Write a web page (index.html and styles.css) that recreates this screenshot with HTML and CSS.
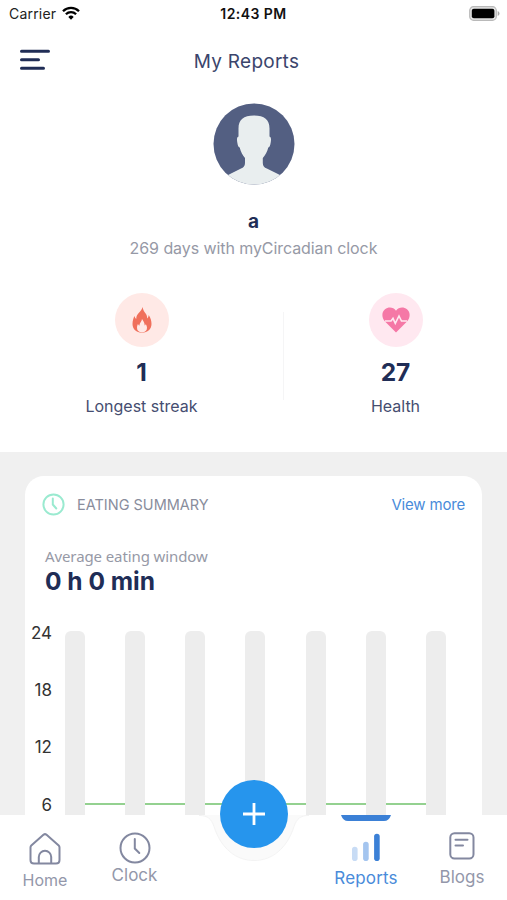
FILE: index.html
```html
<!DOCTYPE html>
<html lang="en">
<head>
<meta charset="utf-8">
<title>My Reports</title>
<link rel="stylesheet" href="styles.css">
</head>
<body>
<div class="status">
  <div class="carrier"><span>Carrier</span>
    <svg width="18" height="14" viewBox="0 0 18 14" fill="none" stroke="#000" stroke-width="2.3"><path d="M1 5.2a11.3 11.3 0 0 1 16 0M3.9 8.3a7.2 7.2 0 0 1 10.2 0"/><path d="M9 13.8l-2.7-2.9a3.8 3.8 0 0 1 5.4 0z" fill="#000" stroke="none"/></svg>
  </div>
  <div class="time">12:43 PM</div>
  <svg class="battery" width="31" height="15" viewBox="0 0 31 15"><rect x=".7" y=".7" width="26.6" height="13.6" rx="3.8" fill="#e4e4e4" stroke="#b9b9b9" stroke-width="1.2"/><rect x="2.8" y="2.7" width="22.6" height="9.6" rx="2" fill="#000"/><path d="M28.7 5v5q1.8-.6 1.8-2.5T28.7 5z" fill="#aaa"/></svg>
</div>
<header class="header">
  <svg width="32" height="22" viewBox="0 0 32 22" stroke="#202d56" stroke-width="3" stroke-linecap="round"><path d="M2.500 2.300h27M2.500 10.800h17M2.500 19.200h22"/></svg>
  <h1>My Reports</h1>
</header>
<section class="profile">
  <svg class="avatar" width="82" height="82" viewBox="0 0 82 82">
    <clipPath id="disc"><circle cx="41" cy="41" r="40.5"/></clipPath>
    <circle cx="41" cy="41" r="40.5" fill="#535f82"/>
    <path clip-path="url(#disc)" fill="#e9eeef" d="M41 12.500c10.500 0 15.500 4 15.500 13v8c1.800.5 1.700 3 1.200 6-.5 3-1 4.500-2.400 5-1 4.500-3 7.500-5.500 10.500v5c0 3 1.500 4.500 4 5.500L66 71.500l5 3V82H11v-7.500l5-3 12-6c2.500-1 4-2.500 4-5.500v-5c-2.500-3-4.300-6-5.300-10.500-1.400-.5-1.900-2-2.400-5-.5-3-.6-5.500 1.200-6v-8c0-9 5-13 15.500-13z"/>
  </svg>
  <h2>a</h2>
  <p>269 days with myCircadian clock</p>
</section>
<section class="stats">
  <div class="stat">
    <div class="badge fire"><svg width="20" height="26" viewBox="0 0 20 26"><path fill="#f0705c" d="M10.500 0c.5 3 2 5 3.500 7 .8 1.300 1.200 2.700 1.100 4.500 1-.7 1.500-2 1.600-3.500 2 3 2.800 6 2.800 9 0 5-3.800 8.700-9.500 8.700S.5 22 .5 17c0-3.500 1-6 2-8 .3 1.300.8 2.200 1.700 3C4.200 6 9.500 5 10.500 0z"/><path fill="#ffe9e6" d="M10 25.500c-3.300 0-5-2-5-4.700 0-1.500.4-2.900 1-3.800.3.900.7 1.400 1.300 1.700.2-3 2.500-4 2.700-6.700 1.400 2 2.600 3.600 2.700 6.500.6-.4.900-.9 1.100-1.600.8 1.400 1.200 2.700 1.200 3.900 0 2.700-1.700 4.700-5 4.700z"/></svg></div>
    <strong>1</strong><span>Longest streak</span>
  </div>
  <div class="divider"></div>
  <div class="stat">
    <div class="badge heart"><svg width="28" height="26" viewBox="0 0 28 26"><path fill="#f578a6" d="M14 25.500L3 14.500C-.5 10.500-.5 5 3 2.200 6.500-.6 11.500 0 14 3.700 16.500 0 21.500-.6 25 2.200c3.500 2.800 3.500 8.300 0 12.300z"/><path d="M3 14h6l2-2.600 2.300 5L17 9l2.500 5H25" fill="none" stroke="#ffe8f0" stroke-width="1.600"/></svg></div>
    <strong>27</strong><span>Health</span>
  </div>
</section>
<main class="content">
  <article class="card">
    <div class="card-head">
      <svg width="23" height="23" viewBox="0 0 23 23" fill="none" stroke="#9aead0" stroke-width="2"><circle cx="11.500" cy="11.500" r="10.100"/><path d="M10.800 5.500v6l3.500 4" stroke-linecap="round"/></svg>
      <h3>EATING SUMMARY</h3><a>View more</a>
    </div>
    <div class="average"><span>Average eating window</span><strong>0 h 0 min</strong></div>
    <div class="chart">
      <div class="axis"><span>24</span><span>18</span><span>12</span><span>6</span></div>
      <div class="bars"><i></i><i></i><i></i><i></i><i></i><i></i><i></i></div>
    </div>
  </article>
</main>
<nav class="nav">
  <div class="tab home"><svg width="32" height="32" viewBox="0 0 32 32" fill="none" stroke="#8388a0" stroke-width="2" stroke-linejoin="round"><path d="M1.500 14.500q0-1.200.8-2L14.700 1.600q1.300-1 2.600 0l12.400 10.900q.8.800.8 2V27q0 3.500-3.500 3.500H5Q1.500 30.500 1.500 27zM9.800 30V24a6.200 6.200 0 0 1 12.400 0v6"/></svg><span>Home</span></div>
  <div class="tab clock"><svg width="32" height="32" viewBox="0 0 32 32" fill="none" stroke="#8388a0" stroke-width="2"><circle cx="16" cy="16" r="14.500"/><path d="M15.800 7v9.500l4.500 4.500" stroke-linecap="round"/></svg><span>Clock</span></div>
  <div class="tab reports"><svg width="30" height="29" viewBox="0 0 30 29" stroke-width="5.600" stroke-linecap="round"><path d="M3.800 16.500v8.700" stroke="#c8dcf5"/><path d="M14.900 11.500v13.700" stroke="#a4c5ef"/><path d="M25.900 3.500v21.700" stroke="#3b80d6"/></svg><span>Reports</span></div>
  <div class="tab blogs"><svg width="26" height="28" viewBox="0 0 26 28" fill="none" stroke="#8388a0" stroke-width="2"><rect x="1.300" y="1.300" width="23.200" height="25.200" rx="4.200"/><path d="M6.500 7.700h12M6.500 13.500h7.500" stroke-linecap="round"/></svg><span>Blogs</span></div>
  <svg class="notch" width="110" height="50" viewBox="0 0 110 50"><path d="M0 0c9 0 12 3 15 11 7 22 22 34 40 34s33-12 40-34c3-8 6-11 15-11z" fill="#fafafa"/><path d="M0 .5c9 0 12 3 15 11 7 22 22 34 40 34s33-12 40-34c3-8 6-11 15-11" fill="none" stroke="#f3f3f3"/></svg>
  <svg class="plus" width="68" height="68" viewBox="0 0 68 68"><circle cx="34" cy="34" r="34" fill="#2695ed"/><path d="M34 23v22M23 34h22" stroke="#fff" stroke-width="2.800"/></svg>
  <svg class="marker" width="50" height="6" viewBox="0 0 50 6"><path d="M0 0h50q-2 6-7 6H7Q2 6 0 0z" fill="#3b80d6"/></svg>
</nav>
</body>
</html>
```
FILE: styles.css
```css
* { box-sizing: border-box; margin: 0; padding: 0; }
body { width: 507px; height: 900px; overflow: hidden; display: flex; flex-direction: column; background: #fff; font-family: Inter, "Liberation Sans", sans-serif; color: #202d56; }
svg { display: block; flex: none; }
.status { height: 28px; padding: 0 7px 0 9px; display: grid; grid-template-columns: 1fr auto 1fr; align-items: center; color: #111; font-size: 14px; line-height: 28px; }
.carrier { display: flex; gap: 6px; align-items: center; color: #222; letter-spacing: .2px; }
.carrier svg { margin-top: -3px; }
.time { font-weight: 600; letter-spacing: .45px; margin-right: 2px; }
.battery { justify-self: end; margin-top: -2px; }
.header { height: 64px; padding: 0 33px 0 19px; display: grid; grid-template-columns: 1fr auto 1fr; align-items: center; }
h1 { font-size: 19px; font-weight: 400; letter-spacing: .25px; line-height: 28px; color: #3b456c; margin-top: 3px; }
.profile { height: 191px; padding-top: 11px; display: flex; flex-direction: column; align-items: center; }
h2 { font-size: 19px; line-height: 26px; margin-top: 24px; }
.profile p { font-size: 16px; line-height: 22px; letter-spacing: -.08px; color: #9699a6; margin-top: 2px; }
.stats { height: 169px; padding-top: 10px; display: flex; align-items: flex-start; }
.stat { width: 283px; height: 145px; display: flex; flex-direction: column; align-items: center; }
.stat:last-child { width: 223px; }
.badge { width: 54px; height: 54px; border-radius: 50%; display: grid; place-items: center; }
.fire { background: #ffe9e6; }
.heart { background: #ffe8f0; }
.stat strong { font-size: 24.5px; line-height: 30px; margin-top: 10px; }
.stat span { font-size: 16px; line-height: 22px; margin-top: 8px; color: #454d70; }
.divider { width: 1px; height: 88px; background: #f5f5f6; margin-top: 19px; }
.content { height: 363px; padding: 24px 25px 0; background: #f0f0f0; overflow: hidden; }
.card { height: 440px; border-radius: 19px; background: #fff; }
.card-head { height: 56px; padding: 0 17px; display: flex; align-items: center; }
h3 { font-size: 14.5px; font-weight: 400; color: #898d9c; margin-left: 12px; }
.card-head a { margin-left: auto; font-size: 15px; letter-spacing: -.18px; color: #498bda; }
.average { height: 99px; padding: 13px 20px 0; display: flex; flex-direction: column; }
.average span { font-family: "Noto Sans", sans-serif; font-size: 15px; letter-spacing: -.1px; line-height: 22px; color: #9699a6; }
.average strong { font-size: 24.500px; line-height: 29px; }
.chart { display: flex; height: 280px; }
.axis { width: 27px; margin-top: -10.500px; display: flex; flex-direction: column; text-align: right; font-size: 17px; color: #333; }
.axis span { height: 57.400px; line-height: 24px; }
.bars { width: 382px; height: 280px; margin-left: 12.500px; display: flex; justify-content: space-between; background: linear-gradient(#94d190, #94d190) 10px 172px / 360px 2px no-repeat; }
.bars i { width: 20px; border-radius: 6px; background: #ededed; }
.nav { height: 85px; position: relative; display: flex; background: #fff; }
.tab { display: flex; flex-direction: column; align-items: center; font-size: 17px; line-height: 22px; color: #9397aa; }
.home { width: 90px; padding-top: 18px; font-size: 16px; }
.home span { margin-top: 4px; }
.clock { width: 89px; padding-top: 17px; }
.clock span { margin-top: 0; }
.reports { width: 120px; margin-left: 127px; padding-top: 18px; color: #498bda; }
.reports span { margin-top: 5px; letter-spacing: .15px; }
.blogs { width: 72px; padding-top: 17px; }
.blogs span { margin-top: 6px; }
.notch { position: absolute; left: 199px; top: 0; }
.plus { position: absolute; left: 220px; top: -35px; }
.marker { position: absolute; left: 341px; top: 0; }
```
